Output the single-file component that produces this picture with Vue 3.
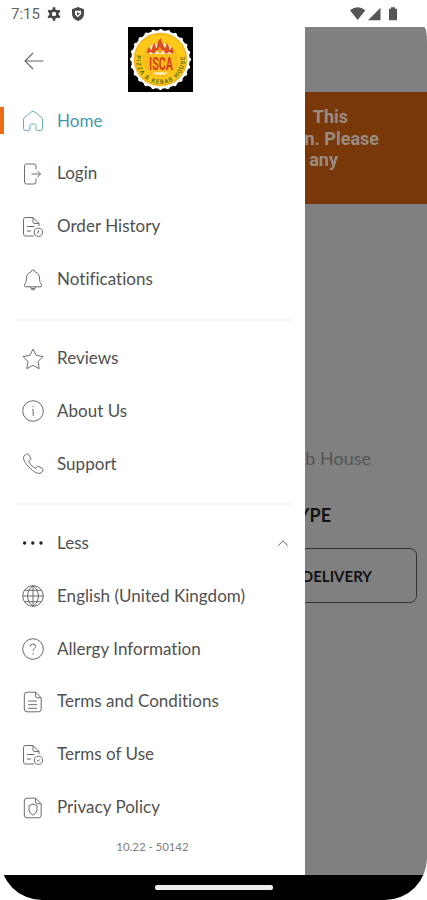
<script setup>
import { reactive } from 'vue'

const data = reactive({
  current: 'Home',
  open: true,
})

const groups = [
  [
    { icon: 'home', label: 'Home' },
    { icon: 'login', label: 'Login' },
    { icon: 'history', label: 'Order History' },
    { icon: 'bell', label: 'Notifications' },
  ],
  [
    { icon: 'star', label: 'Reviews' },
    { icon: 'info', label: 'About Us' },
    { icon: 'phone', label: 'Support' },
  ],
]

const more = [
  { icon: 'globe', label: 'English (United Kingdom)' },
  { icon: 'question', label: 'Allergy Information' },
  { icon: 'terms', label: 'Terms and Conditions' },
  { icon: 'use', label: 'Terms of Use' },
  { icon: 'privacy', label: 'Privacy Policy' },
]

// 22x22 outlines
const icons = {
  home: 'M1.5 9.2Q1.5 8.2 2.3 7.5L9.8 1.6Q11 .8 12.2 1.6L19.7 7.5Q20.5 8.2 20.5 9.2V18.5Q20.5 20.5 18.5 20.5H15.5Q14 20.5 14 19V15.5Q14 14 12.5 14H9.5Q8 14 8 15.5V19Q8 20.5 6.5 20.5H3.5Q1.5 20.5 1.5 18.5Z',
  login: 'M14 6.5V3Q14 1 12 1H4.5Q2.5 1 2.5 3V19Q2.5 21 4.5 21H12Q14 21 14 19V15.5M9.5 11H18.5M15.5 8L18.5 11L15.5 14',
  history: 'M12 20H3.5Q1.5 20 1.5 18V3.5Q1.5 1.5 3.5 1.5H11L17 7.5V10M11 1.5V5.5Q11 7.5 13 7.5H17M5 10.5H12.5M5 15H9M20.5 16.2A4.1 4.1 0 1 1 12.3 16.2A4.1 4.1 0 1 1 20.5 16.2M16.4 14V16.4L14.8 17.2',
  bell: 'M9.2 2.8Q9.2 1 11 1Q12.8 1 12.8 2.8C16.2 3.8 17.3 6.2 17.5 9C17.7 12.3 17.9 13.4 19 14.8C20.1 16.3 19.7 17.8 18 17.8H4C2.3 17.8 1.9 16.3 3 14.8C4.1 13.4 4.3 12.3 4.5 9C4.7 6.2 5.8 3.8 9.2 2.8M8.5 18Q9 21 11 21Q13 21 13.5 18M9.5 19.6H12.5',
  star: 'M11 1L14.1 7.4L21 8.5L16 13.5L17.2 20.7L11 17.3L4.8 20.7L6 13.5L1 8.5L7.9 7.4Z',
  info: 'M21.3 11A10.3 10.3 0 1 1 .7 11A10.3 10.3 0 1 1 21.3 11M10.2 9.5H11.2V16M11.2 6V7.2',
  phone: 'M3.2 1.8L5 .9Q6 .7 6.7 1.6L8.8 5.3Q9.2 6.3 8.3 7.1L6.7 8.4C7.8 11.2 10.8 14.2 13.6 15.3L15 13.7Q15.8 12.9 16.7 13.3L20.4 15.5Q21.3 16.2 20.9 17.1L20 19C18 21.6 13.4 20.4 8.6 15.8C2.8 10.3-.7 4.5 3.2 1.8Z',
  globe: 'M21.3 11A10.3 10.3 0 1 1 .7 11A10.3 10.3 0 1 1 21.3 11M11 .7V21.3M.7 11H21.3M2.6 5.3H19.4M2.6 16.7H19.4M11 .7C3.8 5.5 3.8 16.5 11 21.3M11 .7C18.2 5.5 18.2 16.5 11 21.3',
  question: 'M21.3 11A10.3 10.3 0 1 1 .7 11A10.3 10.3 0 1 1 21.3 11M8.3 8.5Q8.3 6 11 6Q13.7 6 13.7 8.5C13.7 10.5 11 10.4 11 12.8M11 15V16.4',
  terms: 'M13.5 1.2H5Q2.3 1.2 2.3 4V18Q2.3 20.8 5 20.8H16.5Q19.2 20.8 19.2 18V6.8ZM13.5 1.2V4.8Q13.5 6.8 15.5 6.8H19.2M6.2 10H15M6.2 13.7H15M6.2 17.3H15',
  use: 'M12 20H3.5Q1.5 20 1.5 18V3.5Q1.5 1.5 3.5 1.5H11L17 7.5V10M11 1.5V5.5Q11 7.5 13 7.5H17M5 10.5H12.5M5 15H9M20.5 16.2A4.1 4.1 0 1 1 12.3 16.2A4.1 4.1 0 1 1 20.5 16.2M14.8 16.2L16 17.3L18 15.3',
  privacy: 'M13.5 1.2H5Q2.3 1.2 2.3 4V18Q2.3 20.8 5 20.8H16.5Q19.2 20.8 19.2 18V6.8ZM13.5 1.2V4.8Q13.5 6.8 15.5 6.8H19.2M11 7L15 8.8V13Q14.8 16.3 11 18.2Q7.2 16.3 7 13V8.8Z',
}
</script>

<template>
  <div class="phone">
    <header class="status">
      <span class="clock">7:15</span>
      <svg class="gear" width="14" height="14" viewBox="0 0 14 14">
        <circle cx="7" cy="7" r="3.5" />
        <path d="M7 .3V3M7 11V13.7M1.2 3.7L3.5 5M10.5 9L12.8 10.3M1.2 10.3L3.5 9M10.5 5L12.8 3.7" />
      </svg>
      <svg class="shield" width="12" height="14" viewBox="0 0 12 14">
        <path fill="#4a4a4a" d="M6 0L12 2.2V7Q12 11.8 6 14Q0 11.8 0 7V2.2Z" />
        <path fill="#fff" d="M3 3.8H9V7.2L5.8 10.2L3 7.5Z" />
        <path fill="#4a4a4a" d="M5 5L8 6.8L5 8.5Z" />
      </svg>
      <span class="space"></span>
      <svg width="48" height="14" viewBox="0 0 48 14" fill="#555">
        <path d="M0 3.2Q7.7-2.6 15.4 3.2L7.7 13Z" />
        <path d="M18 13.3H30.5V.8Z" />
        <path d="M41 .3H45V1.8H47V13.3H39V1.8H41Z" />
      </svg>
    </header>

    <main>
      <nav class="drawer">
        <div class="top">
          <svg class="back" width="20" height="18" viewBox="0 0 20 18">
            <path d="M19.3 9H1M9 1L1 9L9 17" />
          </svg>
          <svg class="logo" width="65" height="65" viewBox="0 0 65 65">
            <defs>
              <path id="ring" d="M8.5 28A24.42 24.42 0 1 0 56.5 28" />
            </defs>
            <rect width="65" height="65" fill="#000" />
            <circle cx="32.5" cy="32.5" r="29.2" fill="#fff" />
            <circle cx="32.5" cy="32.5" r="28.6" fill="none" stroke="#fff" stroke-width="4" stroke-linecap="round" stroke-dasharray=".1 7.39" />
            <circle cx="32.5" cy="32.5" r="26.8" fill="#f5b51c" />
            <circle cx="32.5" cy="32.5" r="25.2" fill="#ffc91a" />
            <circle cx="32.5" cy="32.5" r="18" fill="#f9bd1a" />
            <path fill="#fff0c0" d="M19 27Q20 18 28 16.5H37Q45 18 46 27ZM24 46Q32.5 44.5 41 46Q32.5 50 24 46Z" />
            <path fill="#df4c1d" d="M19.5 27Q18 22 22 20Q22 23 24 23Q24 18 27 16Q27 21 29 21Q29 14 33 11Q33 15 35 17Q36 20 37 21Q39 19 38 16Q42 19 41.5 23Q43 23 43 20Q47 23 45 27L41 25L38 27L35 23L32 26L29 23L26 27L23 25Z" />
            <path fill="#f9a81c" d="M29 25Q31 23 31 20Q35 23 34 26Z" />
            <text class="isca" x="33" y="42.5" text-anchor="middle" textLength="24" lengthAdjust="spacingAndGlyphs">ISCA</text>
            <text class="house"><textPath href="#ring" textLength="84">PIZZA &amp; KEBAB HOUSE</textPath></text>
          </svg>
        </div>

        <template v-for="(group, i) in groups" :key="i">
          <ul>
            <li v-for="item in group" :key="item.label" :class="{ active: item.label === data.current }" @click="data.current = item.label">
              <svg width="22" height="22" viewBox="0 0 22 22"><path :d="icons[item.icon]" /></svg>
              <span>{{ item.label }}</span>
            </li>
          </ul>
          <hr>
        </template>

        <ul>
          <li @click="data.open = !data.open">
            <svg class="dots" width="22" height="22" viewBox="0 0 22 22">
              <circle cx="2.6" cy="11" r="1.7" />
              <circle cx="10.8" cy="11" r="1.7" />
              <circle cx="19" cy="11" r="1.7" />
            </svg>
            <span>{{ data.open ? 'Less' : 'More' }}</span>
            <svg class="chevron" width="12" height="8" viewBox="0 0 12 8"><path d="M1.3 6.7L6 1.7L10.7 6.7" /></svg>
          </li>
          <template v-if="data.open">
            <li v-for="item in more" :key="item.label">
              <svg width="22" height="22" viewBox="0 0 22 22"><path :d="icons[item.icon]" /></svg>
              <span>{{ item.label }}</span>
            </li>
          </template>
        </ul>
        <p class="version">10.22 - 50142</p>
      </nav>

      <section class="page">
        <div class="banner">
          <p class="l1">This</p>
          <p class="l2">n. Please</p>
          <p class="l3">any</p>
        </div>
        <p class="name">b House</p>
        <h2>YPE</h2>
        <button>DELIVERY</button>
      </section>
    </main>

    <footer><i></i></footer>
  </div>
</template>

<style>
body {
  background: #fff;
}
</style>

<style scoped>
.phone {
  width: 427px;
  height: 900px;
  display: flex;
  flex-direction: column;
  overflow: hidden;
  border-radius: 0 0 42px 42px;
  background: #fff;
  font-family: Lato, sans-serif;
}

p,
h2,
ul {
  margin: 0;
  padding: 0;
}

.status {
  height: 27px;
  flex: none;
  display: flex;
  align-items: center;
  padding: 0 29px 0 11px;
  box-sizing: border-box;
}

.clock {
  width: 36px;
  font: 15px Roboto, sans-serif;
  color: #666;
  white-space: nowrap;
}

.gear {
  margin-right: 11px;
  fill: none;
  stroke: #444;
  stroke-width: 2.6;
}

.space {
  flex: 1;
}

main {
  height: 848px;
  flex: none;
  display: flex;
}

.drawer {
  width: 305px;
  flex: none;
  background: #fff;
}

.top {
  height: 67.6px;
  display: flex;
  align-items: flex-start;
}

.back {
  margin: 25px 84px 0 24px;
  fill: none;
  stroke: #666;
  stroke-width: 1.1;
}

.isca {
  font: 700 18px Roboto, sans-serif;
  fill: #d8401c;
}

.house {
  font: 700 6.2px Roboto, sans-serif;
  fill: #5d7512;
}

li {
  height: 52.9px;
  display: flex;
  align-items: center;
  padding: 0 16px 0 22px;
  font-size: 17px;
  color: #505050;
  list-style: none;
  cursor: pointer;
}

li svg {
  flex: none;
  fill: none;
  stroke: #6c6c6c;
  stroke-width: 1;
  stroke-linejoin: round;
}

li span {
  margin-left: 13px;
  padding-bottom: 2px;
  flex: 1;
  white-space: nowrap;
  letter-spacing: 0.03px;
}

.active {
  color: #3f97ae;
  padding-left: 0;
}

.active:before {
  content: '';
  width: 4px;
  height: 27px;
  margin: -2px 18px 0 0;
  background: #f16a14;
}

.active svg {
  stroke: #6aabb9;
}

li .dots {
  fill: #222;
  stroke: none;
}

hr {
  height: 2px;
  margin: 12.6px 12px 11.4px 16px;
  border: 0;
  background: #f6f6f6;
}

.version {
  margin-top: 6px;
  text-align: center;
  font-size: 11.5px;
  line-height: 14px;
  letter-spacing: -0.05px;
  color: #808080;
}

.page {
  flex: 1;
  min-width: 0;
  overflow: hidden;
  display: flex;
  flex-direction: column;
  align-items: flex-end;
  background: #808080;
  padding-top: 65px;
  border-top-right-radius: 3px 14px;
}

.page p,
.page h2 {
  white-space: nowrap;
}

.banner {
  width: 100%;
  height: 112px;
  box-sizing: border-box;
  padding-top: 14px;
  display: flex;
  flex-direction: column;
  align-items: flex-end;
  background: #78380a;
  color: #9b8b81;
  font: 700 18px/21.5px Roboto, sans-serif;
}

.l1 {
  padding-right: 79px;
}

.l2 {
  padding-right: 48px;
}

.l3 {
  padding-right: 89px;
}

.name {
  margin-top: 243px;
  padding-right: 56px;
  font-size: 18px;
  line-height: 22px;
  color: #545454;
}

h2 {
  margin-top: 35px;
  padding-right: 96px;
  font-size: 18px;
  line-height: 22px;
  color: #111;
}

button {
  width: 150px;
  height: 55px;
  flex: none;
  margin: 22px 10px 0 0;
  padding: 0 44px 0 0;
  text-align: right;
  background: none;
  border: 1px solid #333;
  border-radius: 7px;
  font: 700 15px Lato, sans-serif;
  color: #111;
}

footer {
  height: 25px;
  flex: none;
  display: flex;
  align-items: center;
  justify-content: center;
  background: #000;
}

footer i {
  width: 118px;
  height: 5px;
  border-radius: 2px;
  background: #eee;
}
</style>
